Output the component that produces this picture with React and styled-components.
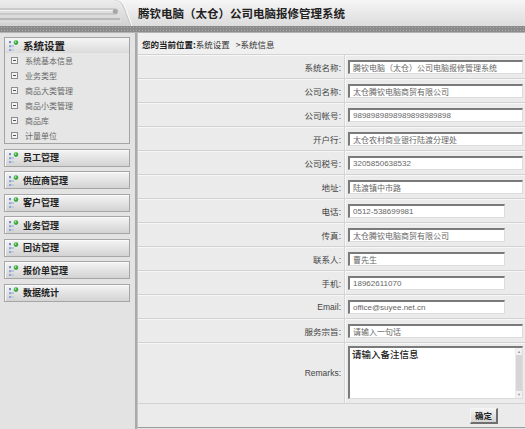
import React from 'react'
import styled, { createGlobalStyle } from 'styled-components'

const GlobalStyle = createGlobalStyle`
  html, body {
    margin: 0;
    padding: 0;
    background: #e2e2e2;
    overflow: hidden;
  }
  body {
    font-family: "Liberation Sans", "Noto Sans CJK SC", sans-serif;
    color: #333;
  }
`

const menus = ['员工管理', '供应商管理', '客户管理', '业务管理', '回访管理', '报价单管理', '数据统计']
const subItems = ['系统基本信息', '业务类型', '商品大类管理', '商品小类管理', '商品库', '计量单位']

const fields = [
  { label: '系统名称', value: '腾钦电脑（太仓）公司电脑报修管理系统', wide: true },
  { label: '公司名称', value: '太仓腾钦电脑商贸有限公司', wide: true },
  { label: '公司帐号', value: '9898989898989898989898', wide: true },
  { label: '开户行', value: '太仓农村商业银行陆渡分理处', wide: true },
  { label: '公司税号', value: '3205850638532', wide: true },
  { label: '地址', value: '陆渡镇中市路', wide: true },
  { label: '电话', value: '0512-538699981' },
  { label: '传真', value: '太仓腾钦电脑商贸有限公司' },
  { label: '联系人', value: '曹先生' },
  { label: '手机', value: '18962611070' },
  { label: 'Email', value: 'office@suyee.net.cn' },
  { label: '服务宗旨', value: '请输入一句话', wide: true },
]

function TreeIcon() {
  return (
    <svg width="11" height="11" viewBox="0 0 11 11">
      <rect x="1" y="1" width="2" height="2" fill="#6d8fc7" />
      <rect x="1" y="5" width="2" height="2" fill="#8aa6d6" />
      <rect x="1" y="9" width="2" height="2" fill="#8aa6d6" />
      <line x1="2" y1="3" x2="2" y2="9" stroke="#a9bde0" strokeWidth="0.8" strokeDasharray="1 1" />
      <line x1="3" y1="6" x2="6" y2="6" stroke="#8aa6d6" strokeWidth="1" />
      <line x1="3" y1="10" x2="6" y2="10" stroke="#a9bde0" strokeWidth="1" />
      <circle cx="8" cy="2.6" r="2.3" fill="#3aa83a" />
      <circle cx="7.5" cy="2" r="0.9" fill="#9ee29e" />
    </svg>
  )
}

function MinusBox() {
  return (
    <svg width="7" height="7" viewBox="0 0 7 7">
      <rect x="0.5" y="0.5" width="6" height="6" fill="#f4f4f4" stroke="#8d8d8d" />
      <line x1="2" y1="3.5" x2="5" y2="3.5" stroke="#555" />
    </svg>
  )
}

function HeaderDeco() {
  return (
    <svg width="132" height="26" viewBox="0 0 132 26">
      <defs>
        <linearGradient id="dg" x1="0" y1="0" x2="0" y2="1">
          <stop offset="0" stopColor="#ececec" />
          <stop offset="1" stopColor="#d2d2d2" />
        </linearGradient>
      </defs>
      <path d="M0 0 H115 C120 0 122 3 124 8 L131 26 H0 Z" fill="url(#dg)" />
      <path d="M115 0 C120 0 122 3 124 8 L131 26" fill="none" stroke="#c3c3c3" strokeWidth="1" />
      <path d="M116.5 0 C121.5 0 123.5 3 125.5 8 L132 26" fill="none" stroke="#fafafa" strokeWidth="1" />
      <rect x="-3" y="9" width="121" height="5" rx="2.5" fill="#dedede" stroke="#a9a9a9" strokeWidth="0.8" />
      <line x1="0" y1="10.5" x2="114" y2="10.5" stroke="#f4f4f4" strokeWidth="1" />
      <circle cx="115" cy="11.5" r="2.3" fill="#a4a4a4" />
      <rect x="0" y="18" width="120" height="2.5" fill="#b9b9b9" />
      <line x1="0" y1="21" x2="121" y2="21" stroke="#ededed" strokeWidth="0.8" />
    </svg>
  )
}

export default function App() {
  return (
    <Page>
      <GlobalStyle />
      <Header>
        <HeaderDeco />
        <Title>腾钦电脑（太仓）公司电脑报修管理系统</Title>
      </Header>
      <Band />
      <Body>
        <Sidebar>
          <Group>
            <GroupHead>
              <TreeIcon />
              <GroupTitle>系统设置</GroupTitle>
            </GroupHead>
            <SubList>
              {subItems.map((s) => (
                <SubItem key={s}>
                  <MinusBox />
                  <span>{s}</span>
                </SubItem>
              ))}
            </SubList>
          </Group>
          {menus.map((m) => (
            <MenuButton key={m}>
              <TreeIcon />
              <span>{m}</span>
            </MenuButton>
          ))}
        </Sidebar>
        <Content>
          <Crumb>
            <b>您的当前位置:</b>
            <span>系统设置</span>
            <Sep>&gt;系统信息</Sep>
          </Crumb>
          {fields.map((f) => (
            <Row key={f.label}>
              <Label>{f.label}:</Label>
              <Cell>
                <Input readOnly value={f.value} $wide={f.wide} />
              </Cell>
            </Row>
          ))}
          <Row $tall>
            <Label>Remarks:</Label>
            <Cell $top>
              <AreaBox>
                <Area readOnly value="请输入备注信息" />
                <ScrollBar>
                  <Arrow>▲</Arrow>
                  <Track />
                  <Arrow>▼</Arrow>
                </ScrollBar>
              </AreaBox>
            </Cell>
          </Row>
          <ButtonRow>
            <Submit>确定</Submit>
          </ButtonRow>
        </Content>
      </Body>
    </Page>
  )
}

const Page = styled.div`
  width: 525px;
  height: 429px;
  display: flex;
  flex-direction: column;
  overflow: hidden;
`

const Header = styled.div`
  height: 26px;
  display: flex;
  align-items: center;
  background: linear-gradient(to bottom, #f6f6f6, #dcdcdc);
  flex-shrink: 0;
`

const Title = styled.div`
  margin-left: 6px;
  font-family: "Noto Sans CJK SC", sans-serif;
  font-size: 11.5px;
  font-weight: 700;
  color: #222;
  white-space: nowrap;
`

const Band = styled.div`
  height: 6px;
  flex-shrink: 0;
  background-color: #8b8b8b;
  background-image: radial-gradient(#a9a9a9 0.6px, transparent 0.8px);
  background-size: 3px 3px;
  border-bottom: 1px solid #b4b4b4;
`

const Body = styled.div`
  flex: 1;
  display: flex;
  min-height: 0;
`

const Sidebar = styled.div`
  width: 126px;
  flex-shrink: 0;
  padding: 4px 5px 0 4px;
  display: flex;
  flex-direction: column;
  gap: 4.5px;
  background: #e3e3e3;
  border-right: 2px solid #a9a9a9;
`

const Group = styled.div`
  border: 1px solid #a4a4a4;
  background: #e6e6e6;
`

const GroupHead = styled.div`
  height: 15px;
  display: flex;
  align-items: center;
  gap: 4px;
  padding-left: 3px;
  background: linear-gradient(to bottom, #f5f5f5, #dadada);
`

const GroupTitle = styled.span`
  font-family: "Noto Sans CJK SC", sans-serif;
  font-size: 10.5px;
  font-weight: 700;
  color: #222;
`

const SubList = styled.div`
  display: flex;
  flex-direction: column;
`

const SubItem = styled.div`
  height: 15px;
  display: flex;
  align-items: center;
  gap: 7px;
  padding-left: 6px;
  font-family: "Noto Sans CJK SC", sans-serif;
  font-size: 8px;
  color: #666;
`

const MenuButton = styled.div`
  height: 16px;
  display: flex;
  align-items: center;
  gap: 4px;
  padding-left: 3px;
  border: 1px solid #a6a6a6;
  box-shadow: inset 1px 1px 0 #fbfbfb;
  background: linear-gradient(to bottom, #f4f4f4, #d3d3d3);
  font-family: "Noto Sans CJK SC", sans-serif;
  font-size: 9px;
  font-weight: 700;
  color: #222;
`

const Content = styled.div`
  flex: 1;
  min-width: 0;
  align-self: flex-start;
  background: #ebebeb;
  border-left: 1px solid #c4c4c4;
  border-bottom: 1px solid #9c9c9c;
  overflow: hidden;
`

const Crumb = styled.div`
  height: 21px;
  display: flex;
  align-items: center;
  padding-left: 4px;
  background: #f0f0f0;
  border-bottom: 1px solid #d2d2d2;
  font-family: "Noto Sans CJK SC", sans-serif;
  font-size: 8.5px;
  color: #333;
  b {
    font-weight: 700;
    color: #222;
  }
`

const Sep = styled.span`
  margin-left: 6px;
`

const Row = styled.div`
  display: grid;
  grid-template-columns: 207px 1fr;
  height: ${(p) => (p.$tall ? '60px' : '23px')};
  border-bottom: 1px solid #d2d2d2;
  box-shadow: inset 0 1px 0 #f7f7f7;
`

const Label = styled.div`
  display: flex;
  align-items: center;
  justify-content: flex-end;
  padding-right: 3px;
  border-right: 1px solid #d6d6d6;
  font-family: "Liberation Sans", "Noto Sans CJK SC", sans-serif;
  font-size: 8.5px;
  color: #444;
`

const Cell = styled.div`
  display: flex;
  align-items: ${(p) => (p.$top ? 'flex-start' : 'center')};
  padding-left: 3px;
  padding-top: ${(p) => (p.$top ? '3px' : '0')};
  box-shadow: inset 1px 0 0 #f8f8f8;
`

const Input = styled.input`
  box-sizing: border-box;
  width: ${(p) => (p.$wide ? '175px' : '157px')};
  height: 14px;
  flex-shrink: 0;
  padding: 0 0 0 3px;
  margin: 0;
  border-style: solid;
  border-width: 2px 1px 1px 2px;
  border-color: #7a7a7a #dcdcdc #dcdcdc #7a7a7a;
  background: #fff;
  outline: none;
  font-family: "Liberation Sans", "Noto Sans CJK SC", sans-serif;
  font-size: 8px;
  color: #666;
`

const AreaBox = styled.div`
  box-sizing: border-box;
  width: 175px;
  height: 53px;
  display: flex;
  border-style: solid;
  border-width: 2px 1px 1px 2px;
  border-color: #7a7a7a #dcdcdc #dcdcdc #7a7a7a;
  background: #fff;
`

const Area = styled.textarea`
  flex: 1;
  border: none;
  resize: none;
  outline: none;
  padding: 0 2px;
  margin: 0;
  overflow: hidden;
  background: transparent;
  font-family: "Noto Sans CJK SC", sans-serif;
  font-size: 9.5px;
  font-weight: 500;
  line-height: 12px;
  color: #222;
`

const ScrollBar = styled.div`
  width: 6px;
  display: flex;
  flex-direction: column;
  background: #e4e4e4;
  border-left: 1px solid #e9e9e9;
`

const Arrow = styled.div`
  height: 7px;
  font-size: 4px;
  line-height: 7px;
  text-align: center;
  color: #999;
  background: #f2f2f2;
`

const Track = styled.div`
  flex: 1;
  background: #d6d6d6;
`

const ButtonRow = styled.div`
  height: 23px;
  display: flex;
  align-items: center;
  justify-content: flex-end;
  padding-right: 27px;
  background: #ebebeb;
`

const Submit = styled.button`
  width: 28px;
  height: 16px;
  padding: 0;
  border-style: solid;
  border-width: 1px 2px 2px 1px;
  border-color: #f4f4f4 #6f6f6f #6f6f6f #f4f4f4;
  background: linear-gradient(to bottom, #f2f2f2, #d4d4d4);
  font-family: "Noto Sans CJK SC", sans-serif;
  font-size: 8.5px;
  font-weight: 700;
  color: #222;
`
